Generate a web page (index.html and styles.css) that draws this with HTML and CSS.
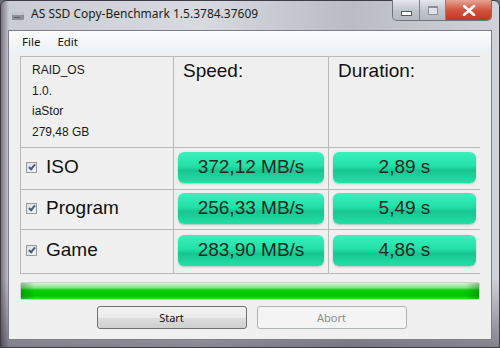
FILE: index.html
```html
<!DOCTYPE html>
<html lang="en">
<head>
  <meta charset="UTF-8">
  <title>AS SSD Copy-Benchmark</title>
  <link rel="stylesheet" href="styles.css">
</head>
<body>

<div class="window">
  <div class="titlebar">
    <svg class="app-icon" width="14" height="14" viewBox="0 0 14 14">
      <rect x="1" y="3" width="12" height="8" rx="1" fill="#8b9096"/>
      <rect x="1" y="3" width="12" height="3" rx="1" fill="#c3c7cc"/>
      <rect x="3" y="8" width="6" height="1" fill="#5d6167"/>
    </svg>
    <span class="title">AS SSD Copy-Benchmark 1.5.3784.37609</span>
    <div class="controls">
      <div class="ctl min"><span class="min-bar"></span></div>
      <div class="ctl max"><span class="max-box"></span></div>
      <div class="ctl close">
        <svg width="14" height="11" viewBox="0 0 14 11">
          <path d="M2 1 L12 10 M12 1 L2 10" stroke="#fff" stroke-width="2.6" stroke-linecap="round"/>
        </svg>
      </div>
    </div>
  </div>

  <div class="client">
    <div class="menubar">
      <span>File</span>
      <span>Edit</span>
    </div>

    <div class="results">
      <div class="cell info">
        <div>RAID_OS</div>
        <div>1.0.</div>
        <div>iaStor</div>
        <div>279,48 GB</div>
      </div>
      <div class="cell head">Speed:</div>
      <div class="cell head">Duration:</div>

      <div class="cell label"><span class="check"></span>ISO</div>
      <div class="cell"><div class="pill">372,12 MB/s</div></div>
      <div class="cell"><div class="pill">2,89 s</div></div>

      <div class="cell label"><span class="check"></span>Program</div>
      <div class="cell"><div class="pill">256,33 MB/s</div></div>
      <div class="cell"><div class="pill">5,49 s</div></div>

      <div class="cell label"><span class="check"></span>Game</div>
      <div class="cell"><div class="pill">283,90 MB/s</div></div>
      <div class="cell"><div class="pill">4,86 s</div></div>
    </div>

    <div class="progress"><div class="progress-fill"></div></div>

    <div class="buttons">
      <button class="btn">Start</button>
      <button class="btn" disabled>Abort</button>
    </div>
  </div>
</div>

</body>
</html>
```

FILE: styles.css
```css
:root {
  --grid-line: #b9b9b9;
  --client-bg: #f0f0f0;
  --pill-top: #3cf0bd;
  --pill-mid: #22e0a6;
  --pill-low: #18c590;
}

body {
  margin: 0;
  font-family: "Liberation Sans", Arial, sans-serif;
  background: #6b6f76;
}

.window {
  width: 500px;
  height: 348px;
  box-sizing: border-box;
  padding: 0 7px 7px;
  display: flex;
  flex-direction: column;
  background:
    linear-gradient(rgba(0, 0, 0, 0) 80%, rgba(40, 30, 50, 0.45) 100%),
    linear-gradient(to right, #7d7282 0px, #c9ccd2 8px, #d7dbe0 40%, #b9bcc3 70%, #cfd3d8 100%);
  border: 1px solid #3c3e44;
  border-radius: 6px 6px 0 0;
}

.titlebar {
  height: 29px;
  display: flex;
  align-items: center;
  position: relative;
}

.app-icon {
  margin: 0 6px 0 3px;
}

.title {
  font-family: "Noto Sans", "DejaVu Sans", sans-serif;
  font-size: 12px;
  color: #1d1d1d;
  margin-top: -4px;
}

.controls {
  position: absolute;
  top: -1px;
  right: 0;
  display: flex;
  height: 20px;
  border: 1px solid #6f737a;
  border-top: none;
  border-radius: 0 0 5px 5px;
  overflow: hidden;
}

.ctl {
  display: flex;
  align-items: center;
  justify-content: center;
  background: linear-gradient(#e4e7eb, #c2c7ce 50%, #b3b8c0);
  border-left: 1px solid #7e838a;
}

.min {
  width: 26px;
  border-left: none;
}

.min-bar {
  width: 9px;
  height: 3px;
  background: #fff;
  border: 1px solid #555a61;
  margin-top: 6px;
}

.max {
  width: 25px;
}

.max-box {
  width: 8px;
  height: 6px;
  border: 1px solid #8b9098;
  border-top-width: 2px;
  background: #dfe2e6;
}

.close {
  width: 45px;
  background: linear-gradient(#e8a493, #d1553f 50%, #c2361f);
}

.client {
  flex: 1;
  background: var(--client-bg);
  border: 1px solid #7b8088;
  display: flex;
  flex-direction: column;
}

.menubar {
  height: 20px;
  background: linear-gradient(#fbfcfd, #eef1f5);
  display: flex;
  align-items: center;
  padding-left: 13px;
  gap: 17px;
  font-family: "Noto Sans", "DejaVu Sans", sans-serif;
  font-size: 11.5px;
  color: #111;
}

.results {
  margin: 5px 11px 0 11px;
  display: grid;
  grid-template-columns: 152px 154px 151px;
  grid-template-rows: 90px 41px 39px 43px;
  gap: 1px;
  background: var(--grid-line);
  border: 1px solid var(--grid-line);
}

.cell {
  background: var(--client-bg);
  display: flex;
  align-items: center;
  padding: 0 4px;
}

.info {
  flex-direction: column;
  align-items: flex-start;
  justify-content: flex-start;
  padding: 3px 11px 0;
  font-size: 12px;
  line-height: 20.5px;
  color: #1a1a1a;
}

.head {
  align-items: flex-start;
  padding: 3px 9px 0;
  font-size: 19px;
  color: #111;
}

.label {
  padding-left: 5px;
  padding-bottom: 3px;
  font-size: 19px;
  color: #111;
}

.check {
  width: 9px;
  height: 9px;
  border: 1px solid #9a9a9a;
  background: linear-gradient(135deg, #dcdfe3, #f6f7f8);
  margin-right: 9px;
  position: relative;
}

.check::after {
  content: "";
  position: absolute;
  left: 3px;
  top: 0px;
  width: 2px;
  height: 5px;
  border: solid #4a5a80;
  border-width: 0 2px 2px 0;
  transform: rotate(40deg);
}

.pill {
  flex: 1;
  height: 31px;
  margin-bottom: 3px;
  border-radius: 6px;
  background: linear-gradient(var(--pill-top), var(--pill-mid) 45%, var(--pill-low) 60%, var(--pill-mid));
  box-shadow: 0 1px 2px rgba(20, 120, 80, 0.35);
  display: flex;
  align-items: center;
  justify-content: center;
  font-size: 19px;
  color: #1b2a22;
}

.progress {
  margin: 8px 11px 0 11px;
  height: 16px;
  background: #e8efe8;
  border: 1px solid #c9d3c9;
  border-radius: 2px;
  overflow: hidden;
}

.progress-fill {
  height: 100%;
  background:
    linear-gradient(to right, rgba(0, 90, 0, 0.35), rgba(0, 0, 0, 0) 3%, rgba(0, 0, 0, 0) 97%, rgba(0, 90, 0, 0.35)),
    linear-gradient(#d9f6d9, #7ee27e 30%, #05cf05 45%, #00c600 80%, #3bd83b);
}

.buttons {
  display: flex;
  justify-content: center;
  gap: 10px;
  margin-top: 6px;
  padding-left: 3px;
}

.btn {
  width: 150px;
  height: 23px;
  font-family: "Noto Sans", "DejaVu Sans", sans-serif;
  font-size: 11px;
  color: #111;
  border: 1px solid #707070;
  border-radius: 3px;
  background: linear-gradient(#f2f2f2, #ebebeb 50%, #dddddd 51%, #cfcfcf);
}

.btn:disabled {
  color: #8d8d8d;
  border-color: #adb2b5;
  background: #f4f4f4;
}
```
